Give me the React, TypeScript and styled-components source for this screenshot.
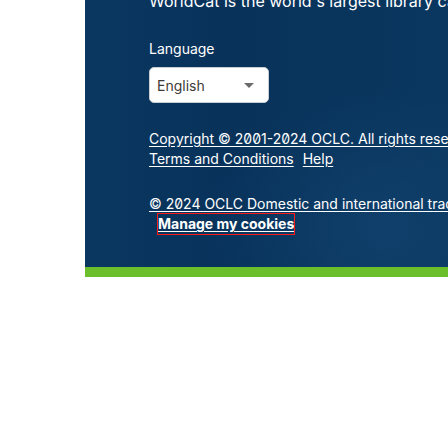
import React from "react";
import styled, { createGlobalStyle } from "styled-components";

const Global = createGlobalStyle`
  html, body { margin: 0; padding: 0; background: #ffffff; overflow: hidden; }
  body { font-family: Inter, "Noto Sans", "Liberation Sans", sans-serif; }
`;

const Page = styled.div`
  display: flex;
  width: 448px;
  height: 448px;
  overflow: hidden;
  background: #ffffff;
`;

const Gutter = styled.div`
  flex: 0 0 85px;
`;

const FooterColumn = styled.div`
  flex: 1;
  min-width: 0;
  display: flex;
  flex-direction: column;
  align-self: flex-start;
`;

const Panel = styled.footer`
  height: 267px;
  box-sizing: border-box;
  padding: 0 0 0 64px;
  background:
    radial-gradient(ellipse 260px 200px at 300px 230px, rgba(20, 72, 118, 0.55), rgba(20, 72, 118, 0) 70%),
    linear-gradient(90deg, #0a3760 0%, #08325a 40%, #0a375f 100%);
  color: #ffffff;
  overflow: hidden;
  white-space: nowrap;
`;

const Strip = styled.div`
  height: 10px;
  background: #6abf2a;
`;

const Heading = styled.p`
  margin: -11px 0 0;
  font-size: 16px;
  line-height: 24px;
  font-weight: 400;
`;

const Label = styled.label`
  display: block;
  margin-top: 26px;
  font-size: 14px;
  line-height: 20px;
`;

const SelectBox = styled.div`
  margin-top: 8px;
  width: 120px;
  height: 36px;
  box-sizing: border-box;
  background: #ffffff;
  border: 1px solid #c9ced4;
  border-radius: 5px;
  display: flex;
  align-items: center;
  justify-content: space-between;
  padding: 0 14px 0 7px;
  color: #3d3a38;
  font-size: 14px;
`;

const Caret = styled.span`
  width: 0;
  height: 0;
  border-left: 5px solid transparent;
  border-right: 5px solid transparent;
  border-top: 5px solid #6b6b6b;
`;

const LinkLine = styled.div<{ $gap?: number }>`
  margin-top: ${(p) => p.$gap ?? 0}px;
  font-size: 14px;
  line-height: 20px;
  display: flex;
  gap: 9px;
  font-feature-settings: "zero" 1;
`;

const FootLink = styled.a`
  color: #ffffff;
  text-decoration: underline;
  text-underline-offset: 2px;
`;

const CookieButton = styled.a`
  margin-left: 9px;
  color: #ffffff;
  font-weight: 700;
  text-decoration: underline;
  text-underline-offset: 2px;
  outline: 1px solid #ff1a1a;
  outline-offset: 0px;
`;

export default function App() {
  return (
    <>
      <Global />
      <Page>
        <Gutter />
        <FooterColumn>
          <Panel>
            <Heading>WorldCat is the world's largest library catalog, helping you find library materials online.</Heading>
            <Label>Language</Label>
            <SelectBox>
              <span>English</span>
              <Caret />
            </SelectBox>
            <LinkLine $gap={26}>
              <FootLink>Copyright © 2001-2024 OCLC. All rights reserved.</FootLink>
            </LinkLine>
            <LinkLine>
              <FootLink>Terms and Conditions</FootLink>
              <FootLink>Help</FootLink>
            </LinkLine>
            <LinkLine $gap={25}>
              <FootLink>© 2024 OCLC Domestic and international trademarks and/or service marks of OCLC, Inc.</FootLink>
            </LinkLine>
            <LinkLine>
              <CookieButton>Manage my cookies</CookieButton>
            </LinkLine>
          </Panel>
          <Strip />
        </FooterColumn>
      </Page>
    </>
  );
}
